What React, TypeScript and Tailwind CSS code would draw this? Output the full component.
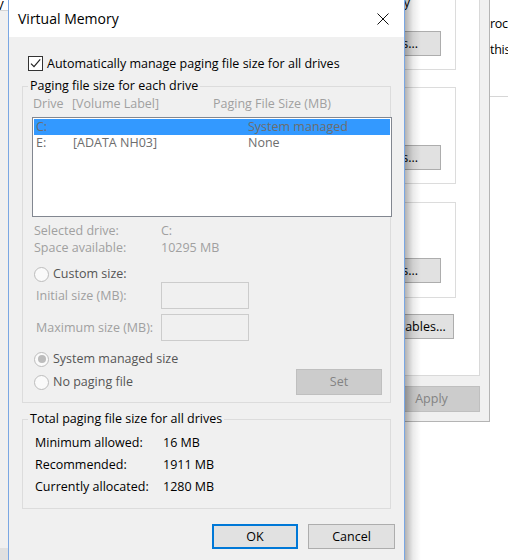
import React from "react";

function CheckBox({ label }: { label: string }) {
  return (
    <div className="ml-[6px] mt-[19px] flex h-[15px] items-center gap-[4px]">
      <span className="flex h-[15px] w-[15px] items-center justify-center border border-[#333333] bg-white">
        <svg width="13" height="13" viewBox="0 0 13 13">
          <path d="M2 6.6 L5 9.6 L11.2 2.4" fill="none" stroke="#222222" strokeWidth="1.2" />
        </svg>
      </span>
      <span className="text-black">{label}</span>
    </div>
  );
}

function Radio({ label, checked }: { label: string; checked?: boolean }) {
  return (
    <div className="flex h-[16px] items-center gap-[4px]">
      <span className="flex h-[15px] w-[15px] items-center justify-center rounded-full border border-[#bcbcbc] bg-[#fafafa]">
        {checked && <span className="h-[8px] w-[8px] rounded-full bg-[#bcbcbc]" />}
      </span>
      <span className="text-[#555555]">{label}</span>
    </div>
  );
}

function SizeField({ label }: { label: string }) {
  return (
    <div className="flex h-[27px] items-center pl-[13px]">
      <span className="w-[125px] text-[#a0a0a0]">{label}</span>
      <span className="h-[27px] w-[88px] border border-[#cccccc] bg-[#f0f0f0]" />
    </div>
  );
}

function BgButton({ text, w }: { text: string; w: string }) {
  return (
    <div
      className={`flex h-[25px] items-center justify-center whitespace-nowrap border border-[#adadad] bg-[#e1e1e1] text-black ${w}`}
    >
      {text}
    </div>
  );
}

// the System Properties window sitting behind the dialog
function SystemProperties() {
  return (
    <div className="absolute left-[300px] top-0 flex h-[422px] w-[190px] flex-col border-b border-r border-[#b4b4b4] bg-[#f0f0f0] pr-[9px]">
      <div className="relative flex h-[376px] flex-col items-end overflow-hidden border-b border-r border-[#d9d9d9] bg-white pr-[23px]">
        <span className="absolute left-[61px] top-[-5px] leading-[16px] text-black">memory</span>
        <div className="mt-[-40px] flex h-[110px] w-[160px] items-end justify-end border border-[#dcdcdc] pb-[13px] pr-[14px]">
          <BgButton text="Settings..." w="w-[102px]" />
        </div>
        <div className="mt-[17px] flex h-[97px] w-[160px] items-end justify-end border border-[#dcdcdc] pb-[13px] pr-[14px]">
          <BgButton text="Settings..." w="w-[102px]" />
        </div>
        <div className="mt-[18px] flex h-[96px] w-[160px] items-end justify-end border border-[#dcdcdc] pb-[14px] pr-[14px]">
          <BgButton text="Settings..." w="w-[102px]" />
        </div>
        <div className="mr-[2px] mt-[16px]">
          <BgButton text="Environment Variables..." w="w-[158px]" />
        </div>
      </div>
      <div className="mt-[10px] flex justify-end">
        <div className="flex h-[26px] w-[97px] items-center justify-center border border-[#bfbfbf] bg-[#cccccc] text-[#838383]">
          Apply
        </div>
      </div>
    </div>
  );
}

export default function App() {
  return (
    <div className="relative h-[560px] w-[508px] overflow-hidden bg-white font-['Open_Sans',sans-serif] text-[12.5px] leading-[16px]">
      {/* window far left */}
      <div className="absolute left-0 top-0 flex h-[560px] w-[8px] flex-col overflow-hidden bg-[#f0f0f0]">
        <div className="h-[11px] shrink-0 overflow-hidden border-b border-[#d4d4d4] bg-white">
          <span className="ml-[-4px] block text-[13px] leading-[11px] text-black">V</span>
        </div>
        <div className="flex-1" />
        <div className="h-[12px] bg-[#e0e0e0]" />
      </div>

      {/* window far right */}
      <div className="absolute left-[490px] top-0 h-[560px] w-[18px] overflow-hidden bg-white">
        <div className="whitespace-nowrap pt-[14px] text-[12.5px] leading-[20px] tracking-[-0.3px] text-black">
          <div>rocess</div>
          <div className="mt-[6px]">this</div>
        </div>
        <div className="mt-[36px] h-px bg-[#d6d6d6]" />
      </div>

      <SystemProperties />

      {/* dialog shadow */}
      <div className="absolute left-[405px] top-0 h-[560px] w-[16px] bg-linear-to-r from-black/30 via-black/8 to-transparent" />

      {/* Virtual Memory dialog */}
      <div className="absolute left-[8px] top-0 flex h-[560px] w-[397px] flex-col border-x border-[#7aa7e3] bg-[#f0f0f0]">
        <div className="flex h-[37px] shrink-0 items-center justify-between bg-white pl-[9px] pr-[15px]">
          <span className="text-[14px] text-black">Virtual Memory</span>
          <svg width="12" height="12" viewBox="0 0 12 12">
            <path d="M0.5 0.5 L11.5 11.5 M11.5 0.5 L0.5 11.5" stroke="#111111" strokeWidth="1" />
          </svg>
        </div>

        <div className="flex flex-col px-[13px]">
          <CheckBox label="Automatically manage paging file size for all drives" />

          <fieldset className="mt-[7px] border border-[#dcdcdc] pb-[7px]">
            <legend className="ml-[5px] px-[2px] text-black">Paging file size for each drive</legend>
            <div className="mt-[2px] flex h-[16px] items-center pl-[10px] text-[#a0a0a0]">
              <span className="w-[39px]">Drive</span>
              <span className="w-[141px]">[Volume Label]</span>
              <span>Paging File Size (MB)</span>
            </div>
            <div className="ml-[9px] mr-[-2px] mt-[5px] h-[100px] border border-[#828790] bg-white p-px text-[#6d6d6d]">
              <div className="flex h-[16px] items-center bg-[#3399ff] pl-[2px]">
                <span className="w-[37px]">C:</span>
                <span className="w-[175px]"></span>
                <span>System managed</span>
              </div>
              <div className="flex h-[16px] items-center pl-[2px]">
                <span className="w-[37px]">E:</span>
                <span className="w-[175px]">[ADATA NH03]</span>
                <span>None</span>
              </div>
            </div>
            <div className="mt-[5px] flex flex-col pl-[11px] text-[#a0a0a0]">
              <div className="flex h-[17px] items-center">
                <span className="w-[127px]">Selected drive:</span>
                <span>C:</span>
              </div>
              <div className="flex h-[17px] items-center">
                <span className="w-[127px]">Space available:</span>
                <span>10295 MB</span>
              </div>
            </div>
            <div className="mt-[10px] pl-[11px]">
              <Radio label="Custom size:" />
            </div>
            <SizeField label="Initial size (MB):" />
            <div className="mt-[5px]">
              <SizeField label="Maximum size (MB):" />
            </div>
            <div className="mt-[10px] pl-[11px]">
              <Radio label="System managed size" checked />
            </div>
            <div className="mt-[2px] flex h-[26px] items-center justify-between pl-[11px] pr-[8px]">
              <Radio label="No paging file" />
              <div className="flex h-[26px] w-[86px] items-center justify-center border border-[#bfbfbf] bg-[#cccccc] text-[#838383]">
                Set
              </div>
            </div>
          </fieldset>

          <fieldset className="mt-[8px] border border-[#dcdcdc] pb-[10px]">
            <legend className="ml-[5px] px-[2px] text-black">Total paging file size for all drives</legend>
            <div className="mt-[5px] flex flex-col pl-[12px] text-black">
              <div className="flex h-[22px] items-center">
                <span className="w-[128px]">Minimum allowed:</span>
                <span>16 MB</span>
              </div>
              <div className="flex h-[22px] items-center">
                <span className="w-[128px]">Recommended:</span>
                <span>1911 MB</span>
              </div>
              <div className="flex h-[22px] items-center">
                <span className="w-[128px]">Currently allocated:</span>
                <span>1280 MB</span>
              </div>
            </div>
          </fieldset>

          <div className="mr-[-4px] mt-[15px] flex justify-end gap-[10px]">
            <div className="flex h-[25px] w-[86px] items-center justify-center border-2 border-[#0078d7] bg-[#e1e1e1] text-black">
              OK
            </div>
            <div className="flex h-[25px] w-[87px] items-center justify-center border border-[#adadad] bg-[#e1e1e1] text-black">
              Cancel
            </div>
          </div>
        </div>
      </div>
    </div>
  );
}
